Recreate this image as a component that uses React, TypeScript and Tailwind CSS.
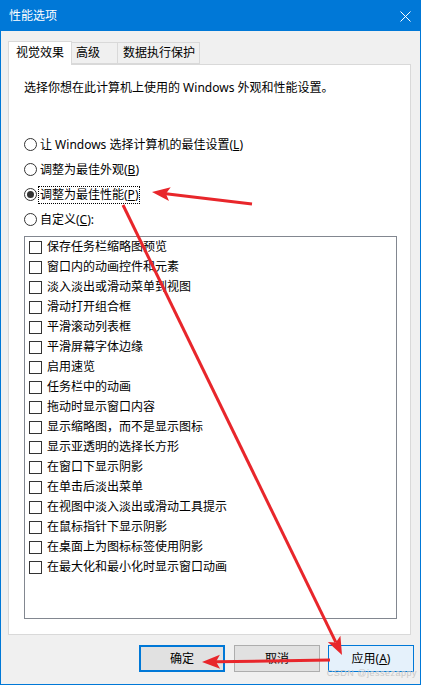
import type { ReactNode } from "react"

const font = { fontFamily: '"Segoe UI", "Noto Sans", "Noto Sans CJK SC", sans-serif' }

const effects = [
  "保存任务栏缩略图预览",
  "窗口内的动画控件和元素",
  "淡入淡出或滑动菜单到视图",
  "滑动打开组合框",
  "平滑滚动列表框",
  "平滑屏幕字体边缘",
  "启用速览",
  "任务栏中的动画",
  "拖动时显示窗口内容",
  "显示缩略图，而不是显示图标",
  "显示亚透明的选择长方形",
  "在窗口下显示阴影",
  "在单击后淡出菜单",
  "在视图中淡入淡出或滑动工具提示",
  "在鼠标指针下显示阴影",
  "在桌面上为图标标签使用阴影",
  "在最大化和最小化时显示窗口动画",
]

function Radio({ checked, focused, children }: { checked?: boolean; focused?: boolean; children: ReactNode }) {
  return (
    <div className="flex items-center h-[25px]">
      <span className="w-[13px] h-[13px] rounded-full border border-[#333333] bg-white flex items-center justify-center">
        {checked && <span className="w-[7px] h-[7px] rounded-full bg-[#333333]" />}
      </span>
      <span className={`ml-[2px] px-px leading-[16px] ${focused ? "outline outline-1 outline-dotted outline-black" : ""}`}>
        {children}
      </span>
    </div>
  )
}

function Arrow({ x1, y1, x2, y2 }: { x1: number; y1: number; x2: number; y2: number }) {
  const dx = x2 - x1
  const dy = y2 - y1
  const len = Math.hypot(dx, dy)
  const ux = dx / len
  const uy = dy / len
  const hl = 18
  const hw = 7
  const bx = x2 - ux * hl
  const by = y2 - uy * hl
  const pts = `${x2},${y2} ${bx - uy * hw},${by + ux * hw} ${bx + ux * 4},${by + uy * 4} ${bx + uy * hw},${by - ux * hw}`
  return (
    <g>
      <line x1={x1} y1={y1} x2={bx + ux * 4} y2={by + uy * 4} stroke="#e8262b" strokeWidth={3} />
      <polygon points={pts} fill="#e8262b" />
    </g>
  )
}

export default function App() {
  return (
    <div className="relative w-[421px] h-[685px] bg-[#f0f0f0] border border-[#0078d7] flex flex-col text-[12px] text-black" style={font}>
      {/* title bar */}
      <div className="h-[30px] bg-[#0078d7] flex items-center justify-between pl-2 pr-[9px] text-white">
        <span>性能选项</span>
        <svg width="11" height="11" viewBox="0 0 11 11">
          <path d="M0.5 0.5 L10.5 10.5 M10.5 0.5 L0.5 10.5" stroke="white" strokeWidth="1" />
        </svg>
      </div>

      <div className="flex flex-col pl-[7px] pr-[9px] pt-[9px]">
        {/* tabs */}
        <div className="flex items-end h-[24px]">
          <div className="h-[24px] w-[64px] bg-white border border-b-0 border-[#d9d9d9] flex items-center justify-center relative z-10 -mb-px pb-px">
            视觉效果
          </div>
          <div className="h-[22px] w-[46px] border border-l-0 border-[#d9d9d9] flex items-center pl-[4px]">
            高级
          </div>
          <div className="h-[22px] w-[82px] border border-l-0 border-[#d9d9d9] flex items-center pl-[5px]">
            数据执行保护
          </div>
        </div>

        {/* panel */}
        <div className="h-[571px] bg-white border border-[#d9d9d9] pl-[15px] pr-[13px] flex flex-col">
          <p className="mt-[15px] leading-[16px]">选择你想在此计算机上使用的 Windows 外观和性能设置。</p>
          <div className="mt-[36px] flex flex-col">
            <Radio>
              让 Windows 选择计算机的最佳设置(<u>L</u>)
            </Radio>
            <Radio>
              调整为最佳外观(<u>B</u>)
            </Radio>
            <Radio checked focused>
              调整为最佳性能(<u>P</u>)
            </Radio>
            <Radio>
              自定义(<u>C</u>):
            </Radio>
          </div>
          <div className="mt-[4px] h-[383px] border border-[#828790] flex flex-col">
            {effects.map((e) => (
              <div key={e} className="h-[20px] flex items-center pl-[4px]">
                <span className="w-[13px] h-[13px] border border-[#333333] bg-white" />
                <span className="ml-[5px]">{e}</span>
              </div>
            ))}
          </div>
        </div>
      </div>

      {/* buttons */}
      <div className="flex justify-end gap-[8px] pr-[6px] mt-[10px]">
        <button className="w-[86px] h-[27px] bg-[#e1e1e1] border-2 border-[#0078d7]">确定</button>
        <button className="w-[86px] h-[27px] bg-[#e1e1e1] border border-[#adadad] ml-px">取消</button>
        <button className="w-[86px] h-[27px] bg-[#e5f1fb] border border-[#0078d7]">
          应用(<u>A</u>)
        </button>
      </div>

      <span className="absolute right-[3px] bottom-[4px] text-[9px] text-[#c8c8c8] tracking-[0.5px]" style={{ fontFamily: '"Liberation Sans", sans-serif' }}>
        CSDN @jessezappy
      </span>

      {/* annotations */}
      <svg className="absolute -left-px -top-px pointer-events-none" width="421" height="685">
        <Arrow x1={252} y1={204} x2={152} y2={192} />
        <Arrow x1={123} y1={205} x2={342} y2={655} />
        <Arrow x1={330} y1={660} x2={202} y2={662} />
      </svg>
    </div>
  )
}
